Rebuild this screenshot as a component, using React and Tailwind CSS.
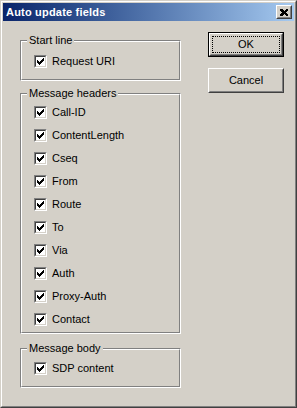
import React from 'react';

const font = { fontFamily: '"Liberation Sans", Arial, sans-serif' };

const CHECK = [
  '......X',
  '.....XX',
  'X...XXX',
  'XX.XXX.',
  'XXXXX..',
  '.XXX...',
  '..X....',
];

function CheckMark() {
  const cells = [];
  CHECK.forEach((row, y) =>
    row.split('').forEach((c, x) => {
      if (c === 'X') cells.push(<rect key={`${x}-${y}`} x={x} y={y} width="1" height="1" fill="#000" />);
    })
  );
  return (
    <svg width="7" height="7" viewBox="0 0 7 7" shapeRendering="crispEdges">
      {cells}
    </svg>
  );
}

function CheckBox({ label }) {
  return (
    <div className="flex items-center h-[13px]">
      <div className="w-[13px] h-[13px] border border-t-[#808080] border-l-[#808080] border-r-white border-b-white">
        <div className="w-full h-full border border-t-[#404040] border-l-[#404040] border-r-[#d4d0c8] border-b-[#d4d0c8] bg-white flex items-center justify-center">
          <CheckMark />
        </div>
      </div>
      <span className="ml-[5px] text-[11px] leading-[13px] text-black">{label}</span>
    </div>
  );
}

function Group({ title, children, className }) {
  return (
    <div className={`relative border border-t-[#808080] border-l-[#808080] border-r-white border-b-white ${className}`}>
      <div className="h-full border border-t-white border-l-white border-r-[#808080] border-b-[#808080]">
        {children}
      </div>
      <span className="absolute left-[6px] top-[-8px] bg-[#d4d0c8] px-[2px] text-[11px] leading-[14px] text-black">
        {title}
      </span>
    </div>
  );
}

function Button({ children, isDefault }) {
  if (isDefault) {
    return (
      <div className="w-[76px] h-[25px] border border-black">
        <div className="h-full border border-t-white border-l-white border-r-[#404040] border-b-[#404040]">
          <div className="h-full border border-t-[#d4d0c8] border-l-[#d4d0c8] border-r-[#808080] border-b-[#808080] p-[1px]">
            <div className="h-full border border-dotted border-black flex items-center justify-center text-[11px] text-black">
              {children}
            </div>
          </div>
        </div>
      </div>
    );
  }
  return (
    <div className="w-[76px] h-[25px] border border-t-white border-l-white border-r-[#404040] border-b-[#404040]">
      <div className="h-full border border-t-[#d4d0c8] border-l-[#d4d0c8] border-r-[#808080] border-b-[#808080] flex items-center justify-center text-[11px] text-black">
        {children}
      </div>
    </div>
  );
}

const headers = ['Call-ID', 'ContentLength', 'Cseq', 'From', 'Route', 'To', 'Via', 'Auth', 'Proxy-Auth', 'Contact'];

export default function App() {
  return (
    <div className="w-[297px] h-[408px] bg-[#d4d0c8] border border-t-[#d4d0c8] border-l-[#d4d0c8] border-r-[#404040] border-b-[#404040]" style={font}>
      <div className="h-full border border-t-white border-l-white border-r-[#808080] border-b-[#808080] p-[1px]">
        {/* title bar */}
        <div className="h-[18px] flex items-center bg-gradient-to-r from-[#0a246a] to-[#a6caf0] pl-[3px] pr-[2px]">
          <span className="text-white font-bold text-[11px] leading-none tracking-[0.2px]">Auto update fields</span>
          <div className="ml-auto w-[16px] h-[14px] border border-t-white border-l-white border-r-[#404040] border-b-[#404040] bg-[#d4d0c8]">
            <div className="h-full border border-t-[#d4d0c8] border-l-[#d4d0c8] border-r-[#808080] border-b-[#808080] flex items-center justify-center">
              <svg width="8" height="7" viewBox="0 0 8 7" shapeRendering="crispEdges">
                <path d="M0 0h2l2 2 2-2h2v1L6 3.5 8 6v1H6L4 5 2 7H0V6l2-2.5L0 1z" fill="#000" />
              </svg>
            </div>
          </div>
        </div>

        <div className="flex pl-[17px]">
          <div className="w-[161px] pt-[19px] flex flex-col">
            <Group title="Start line" className="h-[41px]">
              <div className="pl-[12px] pt-[13px]">
                <CheckBox label="Request URI" />
              </div>
            </Group>
            <Group title="Message headers" className="mt-[12px] h-[241px]">
              <div className="pl-[12px] pt-[11px] flex flex-col gap-[10px]">
                {headers.map((h) => (
                  <CheckBox key={h} label={h} />
                ))}
              </div>
            </Group>
            <Group title="Message body" className="mt-[14px] h-[40px]">
              <div className="pl-[12px] pt-[12px]">
                <CheckBox label="SDP content" />
              </div>
            </Group>
          </div>
          <div className="ml-[27px] pt-[11px] flex flex-col gap-[11px]">
            <Button isDefault>OK</Button>
            <Button>Cancel</Button>
          </div>
        </div>
      </div>
    </div>
  );
}
